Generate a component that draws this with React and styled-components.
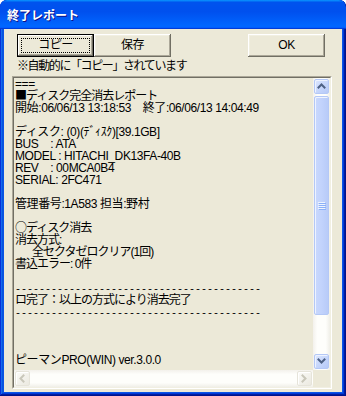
import React from "react";
import styled, { createGlobalStyle } from "styled-components";

const Global = createGlobalStyle`
  html, body { margin: 0; padding: 0; background: #ffffff; }
  body { font-family: "Noto Sans CJK JP", sans-serif; }
  * { box-sizing: border-box; }
`;

const UI_FONT = `"Noto Sans CJK JP", "Liberation Sans", sans-serif`;
const TEXT_FONT = `"Liberation Sans", "Noto Sans CJK JP", sans-serif`;

const Window = styled.div`
  width: 346px;
  height: 396px;
  display: flex;
  flex-direction: column;
  background: #0a55e6;
  border-radius: 7px 7px 0 0;
  overflow: hidden;
  box-shadow: inset -1px -1px #00138c, inset 1px 1px #0831d9,
    inset -2px -2px #001ea0, inset 2px 2px #166aee, inset -3px -3px #003bda,
    inset 3px 3px #0855dd;
`;

const TitleBar = styled.div`
  height: 29px;
  flex-shrink: 0;
  display: flex;
  align-items: center;
  padding-left: 7px;
  background: linear-gradient(
    180deg,
    #0997ff,
    #0053ee 8%,
    #0050ee 40%,
    #06f 88%,
    #06f 93%,
    #005bff 95%,
    #003dd7 96%,
    #003dd7
  );
  border-radius: 7px 7px 0 0;
`;

const Title = styled.span`
  font-family: ${UI_FONT};
  font-size: 12px;
  font-weight: bold;
  color: #ffffff;
  text-shadow: 1px 1px #0f1089;
  line-height: 14px;
  margin-top: 1px;
`;

const Body = styled.div`
  flex: 1;
  min-height: 0;
  display: flex;
  flex-direction: column;
  margin: 0 4px 4px;
  background: #ece9d8;
`;

const ButtonRow = styled.div`
  display: flex;
  padding: 5px 17px 0 13px;
`;

const Button = styled.button`
  position: relative;
  width: ${(p) => p.$w}px;
  height: 23px;
  margin: 0 0 0 ${(p) => (p.$push ? "auto" : "0")};
  padding: 0;
  border: none;
  background: #ece9d8;
  color: #000;
  font-family: ${TEXT_FONT};
  font-size: 12px;
  letter-spacing: -0.5px;
  line-height: 23px;
  box-shadow: ${(p) =>
    p.$default
      ? "inset 0 0 0 1px #000, inset -2px -2px #716f64, inset 2px 2px #fff, inset -3px -3px #aca899"
      : "inset -1px -1px #716f64, inset 1px 1px #fff, inset -2px -2px #aca899, inset 2px 2px #f1efe2"};

  &::after {
    content: "";
    display: ${(p) => (p.$default ? "block" : "none")};
    position: absolute;
    inset: 4px;
    border: 1px dotted #000;
  }
`;

const Note = styled.div`
  height: 14px;
  margin-top: 1px;
  padding-left: 13px;
  font-family: ${UI_FONT};
  font-size: 12px;
  line-height: 14px;
  letter-spacing: -1.4px;
  color: #000;
  white-space: nowrap;
`;

const TextBox = styled.div`
  flex: 1;
  min-height: 0;
  margin: 4px 10px 3px 8px;
  border: 1px solid;
  border-color: #aca899 #ffffff #ffffff #aca899;
  display: flex;
`;

const TextInner = styled.div`
  flex: 1;
  min-width: 0;
  border: 1px solid;
  border-color: #716f64 #f1efe2 #f1efe2 #716f64;
  display: grid;
  grid-template-columns: 1fr 17px;
  grid-template-rows: 1fr 17px;
  background: #ece9d8;
`;

const Content = styled.div`
  overflow: hidden;
  padding-left: 1px;
  font-family: ${TEXT_FONT};
  font-size: 12px;
  color: #000;
`;

const Line = styled.div`
  height: 12px;
  line-height: 12px;
  white-space: pre;
  padding-left: ${(p) => p.$indent || 0}px;
  padding-top: ${(p) => (p.$mono ? "2px" : "0")};
  letter-spacing: ${(p) => (p.$mono ? "0" : p.$jp ? "-1px" : "-0.4px")};
  font-family: ${(p) => (p.$mono ? `"Liberation Mono", monospace` : "inherit")};
  font-size: ${(p) => (p.$mono ? "10px" : "inherit")};
`;

const Mark = styled.span`
  font-family: "Noto Sans CJK JP", sans-serif;
  line-height: 10px;
`;

const VScroll = styled.div`
  display: flex;
  flex-direction: column;
  background: linear-gradient(
    90deg,
    #f3f1ec 0,
    #fefefb 25%,
    #fefefb 75%,
    #f0efe8 100%
  );
`;

const HScroll = styled.div`
  display: flex;
  background: linear-gradient(
    180deg,
    #f3f1ec 0,
    #fefefb 25%,
    #fefefb 75%,
    #f0efe8 100%
  );
`;

const Corner = styled.div`
  background: #ece9d8;
`;

const Track = styled.div`
  flex: 1;
`;

const ScrollBtn = styled.div`
  flex-shrink: 0;
  width: 17px;
  height: ${(p) => (p.$len ? `${p.$len}px` : "17px")};
  padding: 1px;
  display: flex;
`;

const ScrollFace = styled.div`
  flex: 1;
  display: flex;
  align-items: center;
  justify-content: center;
  border-radius: 2px;
  border: 1px solid ${(p) => (p.$disabled ? "#e6e4da" : "#b4c8f6")};
  background: ${(p) =>
    p.$disabled
      ? "linear-gradient(135deg, #fbfbf8, #ebe9e0)"
      : p.$thumb
      ? "linear-gradient(90deg, #c9d8fd, #c2d3fc 50%, #b8cbf8)"
      : "linear-gradient(135deg, #dde7fe, #c3d4fb 60%, #b6c9f7)"};
  box-shadow: ${(p) =>
    p.$disabled ? "inset 1px 1px #ffffff" : "inset 1px 1px #eef3ff"};
`;

const Arrow = ({ dir, color }) => {
  const paths = {
    up: "M1.5 5.5 L4.5 2.5 L7.5 5.5",
    down: "M1.5 2.5 L4.5 5.5 L7.5 2.5",
    left: "M5.5 1.5 L2.5 4.5 L5.5 7.5",
    right: "M2.5 1.5 L5.5 4.5 L2.5 7.5",
  };
  return (
    <svg width="9" height="9" viewBox="0 0 9 9">
      <path
        d={paths[dir]}
        fill="none"
        stroke={color}
        strokeWidth="2"
        strokeLinecap="square"
      />
    </svg>
  );
};

const Grip = () => (
  <svg width="8" height="8" viewBox="0 0 8 8">
    <rect x="0" y="0" width="7" height="1" fill="#eef4fe" />
    <rect x="1" y="1" width="7" height="1" fill="#8cb0f8" />
    <rect x="0" y="2" width="7" height="1" fill="#eef4fe" />
    <rect x="1" y="3" width="7" height="1" fill="#8cb0f8" />
    <rect x="0" y="4" width="7" height="1" fill="#eef4fe" />
    <rect x="1" y="5" width="7" height="1" fill="#8cb0f8" />
    <rect x="0" y="6" width="7" height="1" fill="#eef4fe" />
    <rect x="1" y="7" width="7" height="1" fill="#8cb0f8" />
  </svg>
);

const DASHES = "-----------------------------------------";

const lines = [
  { t: "===" },
  { mark: "■", t: "ディスク完全消去レポート", jp: true },
  { t: "開始:06/06/13 13:18:53　終了:06/06/13 14:04:49" },
  { t: "" },
  { t: "ディスク: (0)(ﾃﾞｨｽｸ)[39.1GB]" },
  { t: "BUS    : ATA" },
  { t: "MODEL : HITACHI_DK13FA-40B" },
  { t: "REV    : 00MCA0B4" },
  { t: "SERIAL: 2FC471" },
  { t: "" },
  { t: "管理番号:1A583 担当:野村" },
  { t: "" },
  { mark: "○", t: "ディスク消去", jp: true },
  { t: "消去方式:", jp: true },
  { t: "全セクタゼロクリア(1回)", indent: 17, jp: true },
  { t: "書込エラー: 0件", jp: true },
  { t: "" },
  { t: DASHES, mono: true },
  { t: "ロ完了：以上の方式により消去完了", jp: true },
  { t: DASHES, mono: true },
  { t: "" },
  { t: "" },
  { t: "" },
  { t: "ピーマンPRO(WIN) ver.3.0.0" },
  { t: "" },
];

export default function App() {
  return (
    <>
      <Global />
      <Window>
        <TitleBar>
          <Title>終了レポート</Title>
        </TitleBar>
        <Body>
          <ButtonRow>
            <Button $w={77} $default>
              コピー
            </Button>
            <Button $w={77}>保存</Button>
            <Button $w={77} $push>
              OK
            </Button>
          </ButtonRow>
          <Note>※自動的に「コピー」されています</Note>
          <TextBox>
            <TextInner>
              <Content>
                {lines.map((l, i) => (
                  <Line key={i} $indent={l.indent} $mono={l.mono} $jp={l.jp}>
                    {l.mark && <Mark>{l.mark}</Mark>}
                    {l.t}
                  </Line>
                ))}
              </Content>
              <VScroll>
                <ScrollBtn>
                  <ScrollFace>
                    <Arrow dir="up" color="#4d6185" />
                  </ScrollFace>
                </ScrollBtn>
                <ScrollBtn $len={221}>
                  <ScrollFace $thumb>
                    <Grip />
                  </ScrollFace>
                </ScrollBtn>
                <Track />
                <ScrollBtn>
                  <ScrollFace>
                    <Arrow dir="down" color="#4d6185" />
                  </ScrollFace>
                </ScrollBtn>
              </VScroll>
              <HScroll>
                <ScrollBtn>
                  <ScrollFace $disabled>
                    <Arrow dir="left" color="#c9c7ba" />
                  </ScrollFace>
                </ScrollBtn>
                <Track />
                <ScrollBtn>
                  <ScrollFace $disabled>
                    <Arrow dir="right" color="#c9c7ba" />
                  </ScrollFace>
                </ScrollBtn>
              </HScroll>
              <Corner />
            </TextInner>
          </TextBox>
        </Body>
      </Window>
    </>
  );
}
